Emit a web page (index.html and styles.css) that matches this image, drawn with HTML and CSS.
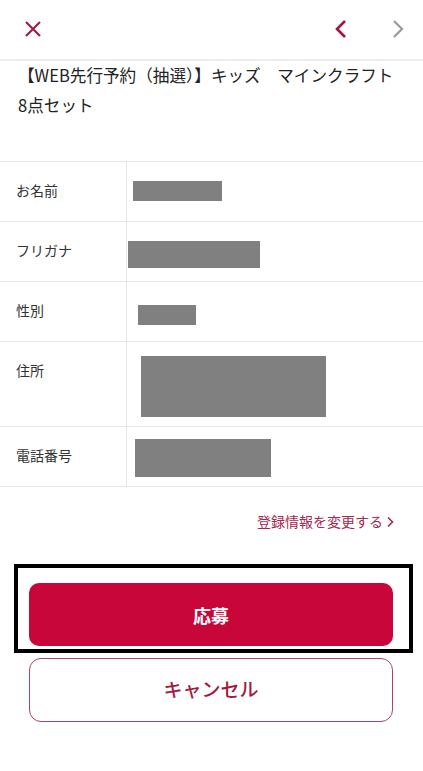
FILE: index.html
```html
<!DOCTYPE html>
<html lang="ja">
<head>
  <meta charset="UTF-8">
  <meta name="viewport" content="width=device-width, initial-scale=1.0">
  <title>応募確認</title>
  <link rel="stylesheet" href="styles.css">
</head>
<body>
  <div class="ap-header">
    <span class="ap-close">
      <svg width="18" height="18" viewBox="0 0 18 18"><path d="M2 2L16 16M16 2L2 16" stroke="#9e1f48" stroke-width="2.2" fill="none"/></svg>
    </span>
    <span class="ap-nav">
      <svg width="14" height="20" viewBox="0 0 14 20"><path d="M11 2L3 10L11 18" stroke="#a0163f" stroke-width="2.6" fill="none"/></svg>
      <svg width="14" height="20" viewBox="0 0 14 20"><path d="M3 2L11 10L3 18" stroke="#9a9a9a" stroke-width="2.2" fill="none"/></svg>
    </span>
  </div>

  <div class="ap-title">【WEB先行予約（抽選）】キッズ　マインクラフト<span class="ap-nowrap">8点セット</span></div>

  <div class="ap-table">
    <div class="ap-row">
      <div class="ap-label">お名前</div>
      <div class="ap-value"><span class="ap-mask mask-name"></span></div>
    </div>
    <div class="ap-row">
      <div class="ap-label">フリガナ</div>
      <div class="ap-value"><span class="ap-mask mask-kana"></span></div>
    </div>
    <div class="ap-row">
      <div class="ap-label">性別</div>
      <div class="ap-value"><span class="ap-mask mask-sex"></span></div>
    </div>
    <div class="ap-row ap-row-tall">
      <div class="ap-label">住所</div>
      <div class="ap-value"><span class="ap-mask mask-addr"></span></div>
    </div>
    <div class="ap-row">
      <div class="ap-label">電話番号</div>
      <div class="ap-value"><span class="ap-mask mask-tel"></span></div>
    </div>
  </div>

  <div class="ap-link">
    <a href="#">登録情報を変更する<svg width="9" height="12" viewBox="0 0 9 12"><path d="M2 1.5L6.5 6L2 10.5" stroke="#a4284f" stroke-width="1.6" fill="none"/></svg></a>
  </div>

  <div class="ap-focus">
    <button class="ap-btn ap-btn-main">応募</button>
  </div>
  <button class="ap-btn ap-btn-cancel">キャンセル</button>
</body>
</html>
```

FILE: styles.css
```css
body {
  margin: 0;
  font-family: "Noto Sans CJK JP", "Noto Sans", sans-serif;
  color: #222;
  background: #fff;
}
.ap-header {
  display: flex;
  justify-content: space-between;
  align-items: center;
  height: 59px;
  border-bottom: 2px solid #ececec;
  padding: 0 18px 0 24px;
}
.ap-close svg, .ap-nav svg { display: block; }
.ap-close { padding-bottom: 2px; }
.ap-nav {
  display: flex;
  gap: 43px;
  padding-bottom: 2px;
}
.ap-title {
  padding: 0 18px;
  font-size: 16.6px;
  line-height: 30px;
  margin-top: -1px;
}
.ap-nowrap { white-space: nowrap; }
.ap-table {
  margin-top: 41px;
  border-top: 1px solid #e6e6e6;
}
.ap-row {
  display: grid;
  grid-template-columns: 127px 1fr;
  height: 60px;
  box-sizing: border-box;
  border-bottom: 1px solid #e6e6e6;
}
.ap-row-tall { height: 85px; }
.ap-label {
  border-right: 1px solid #e6e6e6;
  padding: 18px 0 0 16px;
  font-size: 14px;
  line-height: 20px;
  color: #333;
}
.ap-mask {
  display: block;
  background: #808080;
}
.mask-name { width: 89px; height: 20px; margin: 19px 0 0 6px; }
.mask-kana { width: 132px; height: 27px; margin: 19px 0 0 1px; }
.mask-sex { width: 58px; height: 20px; margin: 23px 0 0 11px; }
.mask-addr { width: 185px; height: 61px; margin: 14px 0 0 14px; }
.mask-tel { width: 136px; height: 38px; margin: 12px 0 0 8px; }
.ap-link {
  margin-top: 24px;
  padding-right: 28px;
  text-align: right;
  font-size: 14px;
  line-height: 20px;
}
.ap-link a {
  color: #a4284f;
  text-decoration: none;
}
.ap-link svg { margin-left: 3px; vertical-align: -1px; }
.ap-focus {
  margin: 33px 10px 0 14px;
  border: 4px solid #000;
  padding: 15px 16px 3px 11px;
}
.ap-btn {
  display: block;
  width: 100%;
  height: 63px;
  font-family: inherit;
  font-size: 18px;
  font-weight: bold;
  border-radius: 10px;
  cursor: pointer;
}
.ap-btn-main {
  background: #c8063a;
  color: #fff;
  border: 0;
}
.ap-btn-cancel {
  width: 364px;
  height: 64px;
  margin: 5px 0 0 29px;
  background: #fff;
  color: #a5193f;
  border: 1px solid #a8456a;
  border-radius: 12px;
  font-size: 19px;
  font-weight: 500;
  padding-bottom: 4px;
}
```
